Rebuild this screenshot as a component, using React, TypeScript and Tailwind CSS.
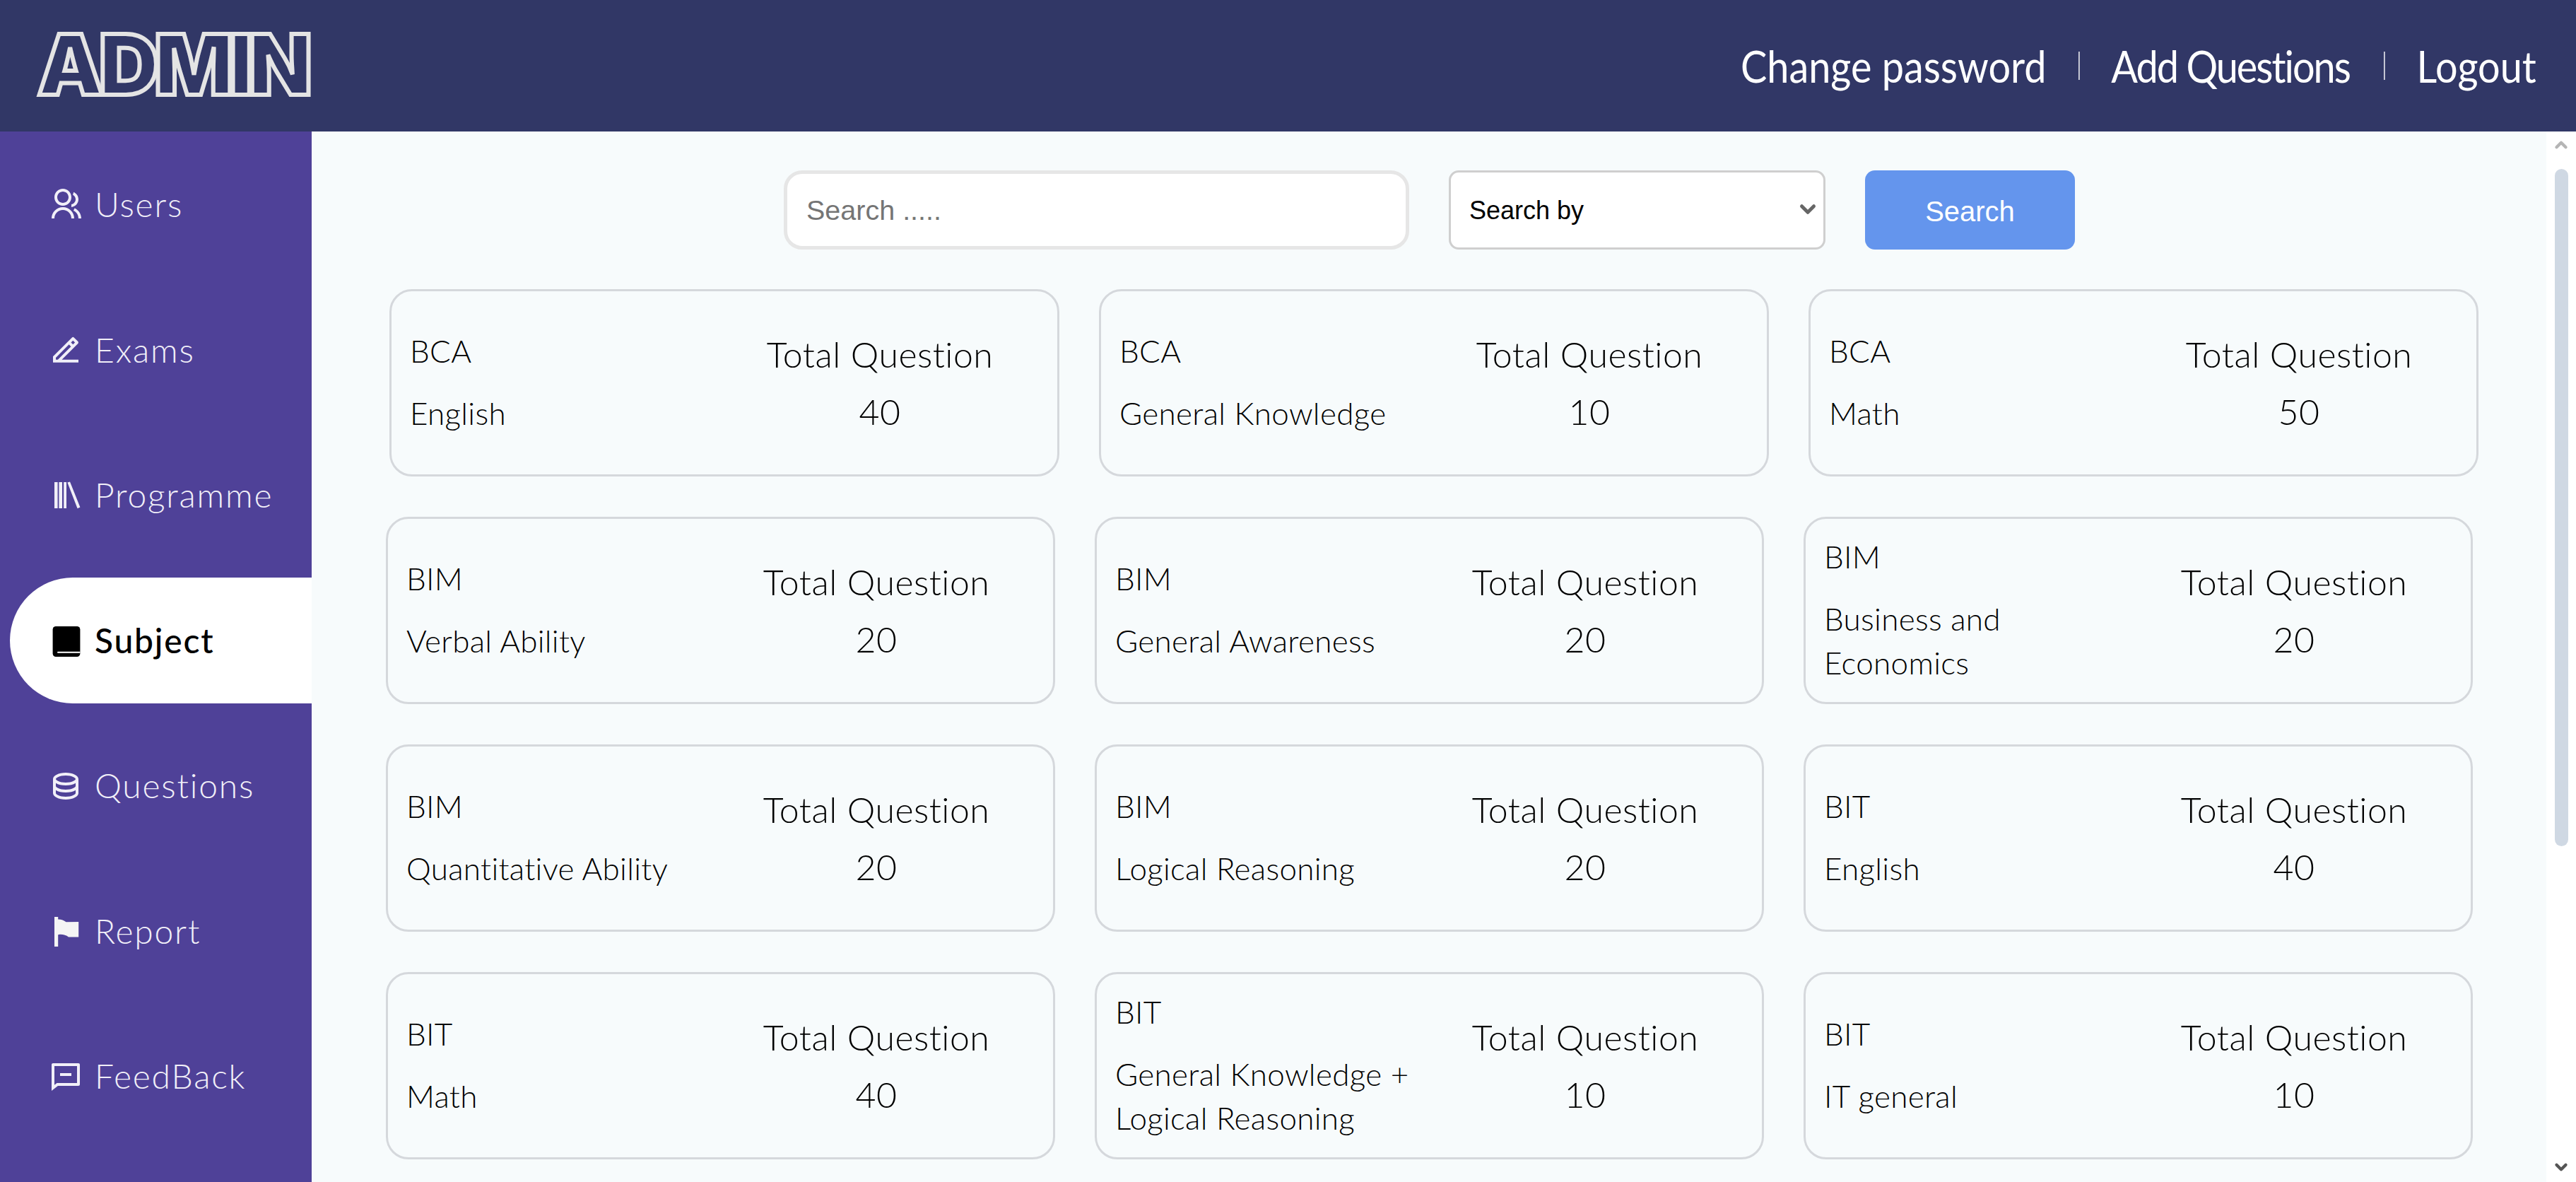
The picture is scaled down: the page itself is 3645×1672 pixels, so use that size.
import React from 'react';
import { ChevronDown, ChevronUp } from 'lucide-react';
import { RiDatabase2Line, RiEdit2Line, RiGroupLine, RiMessageLine } from 'react-icons/ri';

const LibraryIcon = () => (
  <svg viewBox="0 0 24 24" className="w-12 h-12" fill="currentColor">
    <rect x="4" y="3" width="2.3" height="18.5" />
    <rect x="7.2" y="3" width="2.3" height="18.5" />
    <rect x="10.6" y="3" width="1.9" height="18.5" />
    <path d="M13.2 3.3 15 2.8 22.2 20.8 20.3 21.6z" />
  </svg>
);

const BookIcon = () => (
  <svg viewBox="0 0 24 24" className="w-12 h-12">
    <rect x="2.8" y="2" width="19.4" height="21.5" rx="2.2" fill="currentColor" />
    <path d="M6.5 19.9H22.2v1H6.500a.5 .5 0 0 1 0-1z" fill="#fff" />
  </svg>
);

const FlagIcon = () => (
  <svg viewBox="0 0 24 24" className="w-12 h-12" fill="#f5f5f5">
    <path d="M4 2h2.6v1.700c2.300-.1 4 .6 5.700 1.900L21.100 5.500V16.200H14c-2-1.500-4.800-2.100-7.400-1.600V23H4z" />
  </svg>
);

const navItems = [
  { label: 'Users', icon: <RiGroupLine className="w-12 h-12" /> },
  { label: 'Exams', icon: <RiEdit2Line className="w-12 h-12" /> },
  { label: 'Programme', icon: <LibraryIcon /> },
  { label: 'Subject', icon: <BookIcon />, active: true },
  { label: 'Questions', icon: <RiDatabase2Line className="w-12 h-12" /> },
  { label: 'Report', icon: <FlagIcon /> },
  { label: 'FeedBack', icon: <RiMessageLine className="w-12 h-12" /> },
];

const rows = [
  [
    { prog: 'BCA', subject: 'English', total: 40 },
    { prog: 'BCA', subject: 'General Knowledge', total: 10 },
    { prog: 'BCA', subject: 'Math', total: 50 },
  ],
  [
    { prog: 'BIM', subject: 'Verbal Ability', total: 20 },
    { prog: 'BIM', subject: 'General Awareness', total: 20 },
    { prog: 'BIM', subject: 'Business and Economics', total: 20 },
  ],
  [
    { prog: 'BIM', subject: 'Quantitative Ability', total: 20 },
    { prog: 'BIM', subject: 'Logical Reasoning', total: 20 },
    { prog: 'BIT', subject: 'English', total: 40 },
  ],
  [
    { prog: 'BIT', subject: 'Math', total: 40 },
    { prog: 'BIT', subject: 'General Knowledge + Logical Reasoning', total: 10 },
    { prog: 'BIT', subject: 'IT general', total: 10 },
  ],
];

const SubjectCard = ({ prog, subject, total, wide }: { prog: string; subject: string; total: number; wide: boolean }) => (
  <div
    className={
      wide
        ? 'w-[948px] h-[265px] flex items-center border-[3px] border-[#d5d8dc] rounded-[32px] pl-[26px] text-black font-light'
        : 'w-[947px] h-[265px] flex items-center border-[3px] border-[#d5d8dc] rounded-[32px] pl-[26px] text-black font-light'
    }
  >
    <div className="w-[424px] flex flex-col gap-[26px] pb-[4px] text-[44px] leading-[62px] tracking-[0.3px]">
      <p>{prog}</p>
      <p>{subject}</p>
    </div>
    <div className="w-[482px] flex flex-col items-center gap-[19px] text-[50px] leading-[62px] tracking-[0.5px]">
      <p>Total Question</p>
      <p>{total}</p>
    </div>
  </div>
);

export default function App() {
  return (
    <div className="h-screen flex flex-col overflow-hidden bg-white [font-family:Lato,sans-serif]">
      <header className="h-[186px] shrink-0 flex items-center justify-between bg-[#313766] pl-[53px] pr-[56px]">
        <div className="w-[390px] h-[92px] mb-[4px] flex items-center">
          <span className="[font-family:Inter,sans-serif] font-black text-[118px] leading-none tracking-[-7px] text-[#313766] [-webkit-text-stroke:6px_#e4e4e4] [stroke-linejoin:round]">
            ADMIN
          </span>
        </div>
        <nav className="flex items-center origin-right scale-x-[0.9] text-white text-[62px] leading-none">
          <a>Change password</a>
          <span className="mx-[50px] w-[2px] h-[40px] bg-white/80" />
          <a className="tracking-[-2.200px]">Add Questions</a>
          <span className="ml-[53px] mr-[50px] w-[2px] h-[40px] bg-white/80" />
          <a>Logout</a>
        </nav>
      </header>

      <div className="flex-1 flex min-h-0">
        <aside className="w-[441px] shrink-0 bg-[#4f4198] pt-[14px] pl-[14px] flex flex-col gap-[27.500px]">
          {navItems.map((item) => (
            <div
              key={item.label}
              className={
                item.active
                  ? 'h-[178px] shrink-0 flex items-center pl-[55px] gap-[17px] bg-white text-black rounded-l-[89px] text-[48px] font-medium tracking-[1.800px]'
                  : 'h-[178px] shrink-0 flex items-center pl-[55px] gap-[17px] text-[#f1eff8] text-[48px] font-light tracking-[1.800px]'
              }
            >
              {item.icon}
              <span>{item.label}</span>
            </div>
          ))}
        </aside>

        <main className="flex-1 min-w-0 bg-[#f7fbfc] overflow-hidden">
          <div className="flex items-start pt-[55px] pl-[668px]">
            <input
              placeholder="Search ....."
              className="w-[885px] h-[112px] bg-white border-[5px] border-[#e6e6e6] rounded-[26px] pl-[27px] text-[39.500px] [font-family:'Liberation_Sans',sans-serif] placeholder:text-[#757575] outline-none"
            />
            <div className="relative ml-[56px] w-[533px] h-[112px]">
              <select className="w-full h-full appearance-none bg-white border-[3px] border-[#cfcfcf] rounded-[14px] pl-[26px] pt-[2px] text-[36px] text-black [font-family:'Liberation_Sans',sans-serif] outline-none">
                <option>Search by</option>
              </select>
              <ChevronDown className="absolute right-[8px] top-[38px] w-[34px] h-[34px] text-[#666]" strokeWidth={3.5} />
            </div>
            <button className="ml-[56px] w-[297px] h-[112px] pt-[3px] bg-[#6495ed] rounded-[14px] text-white text-[40px] [font-family:'Liberation_Sans',sans-serif]">
              Search
            </button>
          </div>

          <div className="mt-[56px] flex flex-col gap-[57px]">
            {rows.map((row, i) => (
              <div key={i} className={i === 0 ? 'flex gap-[56px] pl-[110px]' : 'flex gap-[56px] pl-[105px]'}>
                {row.map((card) => (
                  <SubjectCard key={card.prog + card.subject} {...card} wide={i === 0} />
                ))}
              </div>
            ))}
          </div>
        </main>

        {/* scrollbar */}
        <div className="w-[42px] shrink-0 bg-white flex flex-col items-center pt-[6px]">
          <ChevronUp className="w-[26px] h-[26px] text-[#b5b5b5]" strokeWidth={4} />
          <div className="mt-[21px] w-[19px] h-[958px] rounded-full bg-[#cfd8e3]" />
          <div className="flex-1" />
          <ChevronDown className="w-[26px] h-[26px] text-[#555] mb-[8px]" strokeWidth={4} />
        </div>
      </div>
    </div>
  );
}
